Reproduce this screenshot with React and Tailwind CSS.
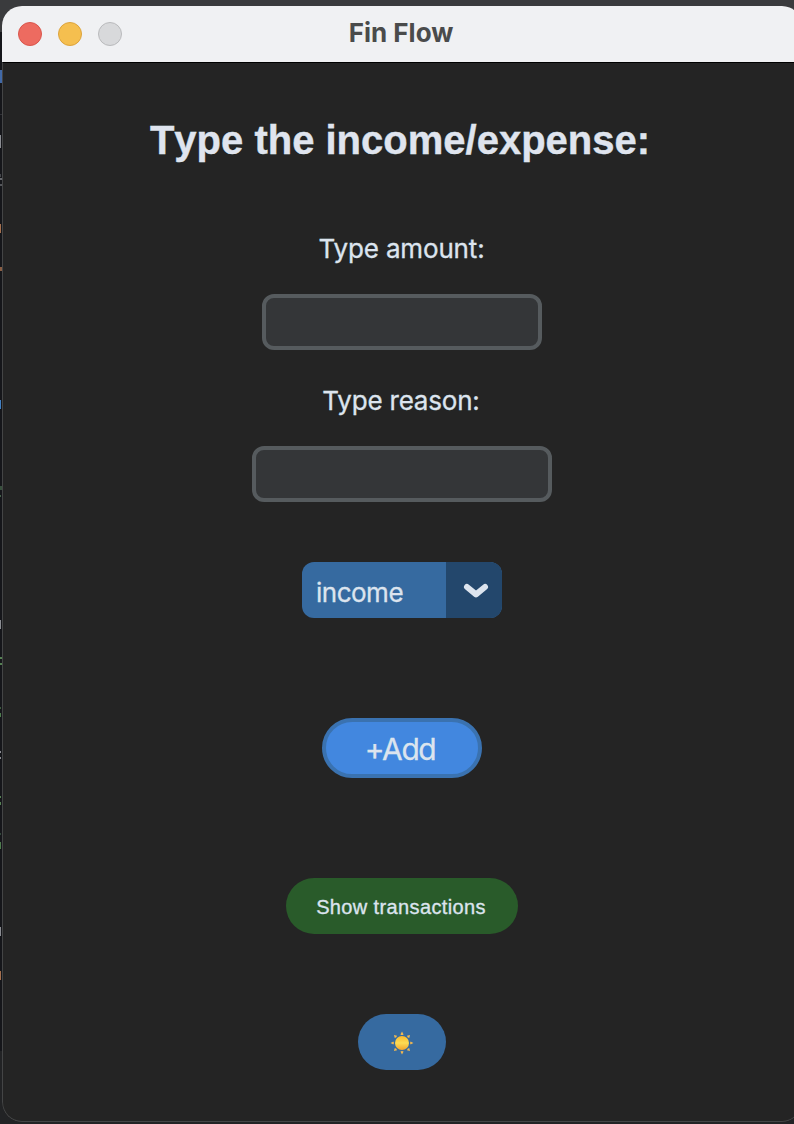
import React from "react";

const inter = "font-['Inter','Liberation_Sans',sans-serif]";
const helvetica = "font-['Liberation_Sans',sans-serif]";

// Slivers of the editor window that shows behind the left edge.
const slivers = [
  { top: 70, height: 13, className: "w-0.5 bg-[#4169a8]" },
  { top: 135, height: 13, className: "w-px bg-[#8b8d92]" },
  { top: 174, height: 3, className: "w-px bg-[#45474b]" },
  { top: 178, height: 2, className: "w-0.5 bg-[#66686c]" },
  { top: 184, height: 2, className: "w-0.5 bg-[#55575b]" },
  { top: 224, height: 9, className: "w-px bg-[#a5704e]" },
  { top: 267, height: 4, className: "w-0.5 bg-[#8a5e44]" },
  { top: 400, height: 9, className: "w-px bg-[#4180c4]" },
  { top: 486, height: 4, className: "w-0.5 bg-[#38503d]" },
  { top: 495, height: 2, className: "w-px bg-[#45614a]" },
  { top: 620, height: 9, className: "w-px bg-[#8b8d92]" },
  { top: 657, height: 2, className: "w-0.5 bg-[#568253]" },
  { top: 663, height: 2, className: "w-0.5 bg-[#568253]" },
  { top: 707, height: 2, className: "w-px bg-[#3c5b3c]" },
  { top: 713, height: 4, className: "w-px bg-[#4e7d4d]" },
  { top: 751, height: 2, className: "w-px bg-[#8b8d92]" },
  { top: 757, height: 2, className: "w-px bg-[#8b8d92]" },
  { top: 796, height: 2, className: "w-px bg-[#568253]" },
  { top: 802, height: 3, className: "w-px bg-[#568253]" },
  { top: 833, height: 2, className: "w-px bg-[#33493a]" },
  { top: 842, height: 7, className: "w-px bg-[#4e7d4d]" },
  { top: 927, height: 9, className: "w-px bg-[#8b8d92]" },
  { top: 971, height: 9, className: "w-px bg-[#a5704e]" },
];

function SunIcon() {
  return (
    <svg width="24" height="24" viewBox="0 0 24 24" aria-hidden="true">
      <defs>
        <linearGradient id="sun" x1="0" y1="0" x2="0" y2="1">
          <stop offset="0" stopColor="#fbb92b" />
          <stop offset="0.5" stopColor="#fddc55" />
          <stop offset="1" stopColor="#f3a42c" />
        </linearGradient>
      </defs>
      {[0, 45, 90, 135, 180, 225, 270, 315].map((a) => (
        <path key={a} d="M12 0.6 L13.6 3.4 Q12 4.6 10.4 3.4 Z" fill="#f2b850" transform={`rotate(${a} 12 12)`} />
      ))}
      <circle cx="12" cy="12" r="7" fill="url(#sun)" />
    </svg>
  );
}

function TitleBar() {
  return (
    <header className="relative flex h-14 items-center gap-4 bg-[#f0f1f3] pl-4">
      <i className="size-6 rounded-full border border-[#d9564c] bg-[#ed6b60]" />
      <i className="size-6 rounded-full border border-[#dca33c] bg-[#f5bf4f]" />
      <i className="size-6 rounded-full border border-[#b9babc] bg-[#d8d9db]" />
      <h1 className={`absolute inset-x-0 top-[11px] pr-0.5 text-center text-[26px] leading-8 font-bold tracking-[0px] text-[#4a4b4b] ${inter}`}>
        Fin Flow
      </h1>
    </header>
  );
}

export default function App() {
  return (
    <div className="relative h-[1124px] w-full overflow-hidden bg-[#15161a]">
      <div className="absolute inset-x-0 top-0 h-8 bg-[#3a3b3d]" />
      <div className="absolute left-0 top-[1051px] h-[73px] w-full bg-[#222325]" />
      <div className="absolute left-0 top-[114px] h-px w-0.5 bg-[#303136]" />
      {slivers.map((s) => (
        <i key={s.top} className={`absolute left-0 ${s.className}`} style={{ top: s.top, height: s.height }} />
      ))}

      <div className="relative ml-0.5 h-full pt-1.5">
        <div className="h-[1116px] w-[800px] overflow-hidden rounded-[20px] bg-[#242424]">
          <TitleBar />
          <main className="flex h-[1060px] flex-col items-center rounded-b-[20px] border-x border-b border-[#444546] border-t border-t-black pt-[53px] text-[#dce4ee]">
            <h2 className={`h-12 whitespace-nowrap pr-1 text-[40px] leading-[48px] font-bold [font-kerning:none] text-[#dfe4ee] [-webkit-text-stroke:0.4px] ${helvetica}`}>
              Type the income/expense:
            </h2>
            <label htmlFor="amount" className={`mt-[69px] h-8 pr-px text-[26px] leading-8 tracking-[-0.15px] [-webkit-text-stroke:0.3px] ${inter}`}>
              Type amount:
            </label>
            <input id="amount" className="mt-[29px] h-14 w-[280px] rounded-xl border-4 border-[#565b5e] bg-[#343638]" />
            <label htmlFor="reason" className={`mt-[35px] h-8 pr-0.5 text-[26px] leading-8 tracking-[-0.2px] [-webkit-text-stroke:0.3px] ${inter}`}>
              Type reason:
            </label>
            <input id="reason" className="mt-[29px] h-14 w-[300px] rounded-xl border-4 border-[#565b5e] bg-[#343638]" />

            <button className="mt-[60px] flex h-14 w-[200px] overflow-hidden rounded-xl bg-[#366aa0]">
              <span className={`flex h-full w-36 items-center pt-1.5 pl-3.5 text-[26px] leading-8 tracking-[-0.5px] [-webkit-text-stroke:0.3px] ${inter}`}>
                income
              </span>
              <span className="flex h-full flex-1 items-center justify-center bg-[#23476c] pl-1 pt-0.5">
                <svg width="28" height="20" viewBox="0 0 28 20" fill="none" stroke="#dce4ee" strokeWidth="6" strokeLinecap="round" strokeLinejoin="round" aria-hidden="true">
                  <path d="M5 6 L14 13.3 L23 6" />
                </svg>
              </span>
            </button>

            <button className={`mt-[100px] flex h-[60px] w-40 items-center justify-center rounded-full border-4 border-[#3a72b0] bg-[#4287df] pt-0.5 pr-1 text-[30px] leading-9 tracking-[-1.4px] [-webkit-text-stroke:0.3px] ${inter}`}>
              +Add
            </button>

            <button className={`mt-[100px] flex h-14 w-[232px] items-center justify-center whitespace-nowrap rounded-full bg-[#295b2a] pt-0.5 pr-0.5 text-[20px] leading-6 tracking-[0.37px] [-webkit-text-stroke:0.35px] ${helvetica}`}>
              Show transactions
            </button>

            <button aria-label="Toggle theme" className="mt-20 flex h-14 w-[88px] items-center justify-center rounded-full bg-[#366aa0] pt-0.5 pr-px">
              <SunIcon />
            </button>
          </main>
        </div>
      </div>
    </div>
  );
}
